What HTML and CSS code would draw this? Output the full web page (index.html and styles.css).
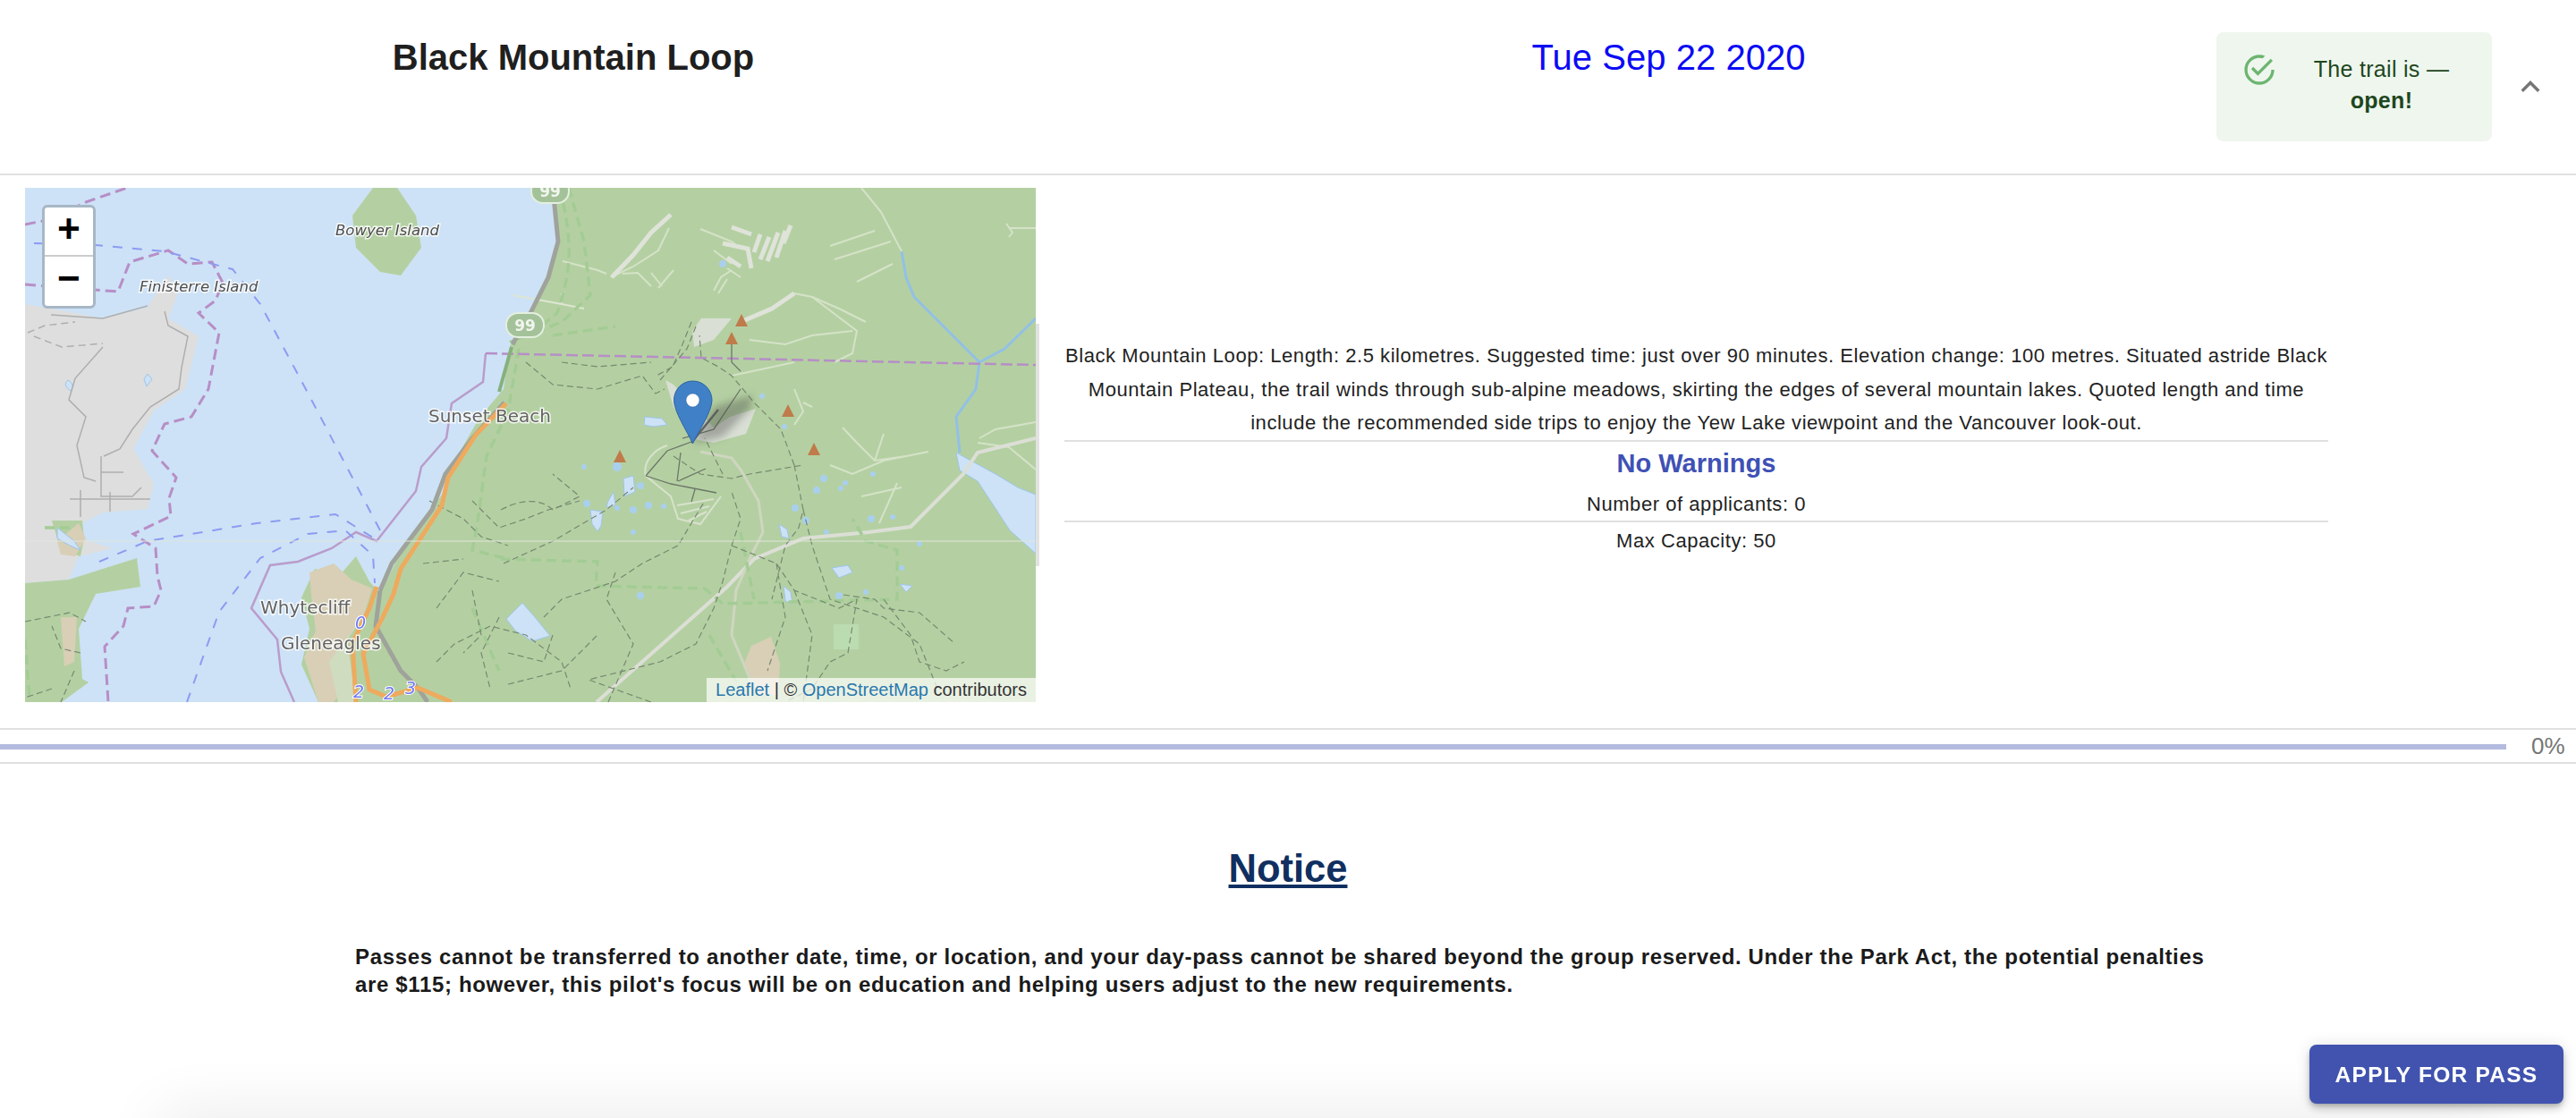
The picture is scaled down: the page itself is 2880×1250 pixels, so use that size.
FILE: index.html
```html
<!DOCTYPE html>
<html lang="en">
<head>
<meta charset="utf-8">
<title>Black Mountain Loop</title>
<link rel="stylesheet" href="styles.css">
</head>
<body>
<main class="page">
  <header class="trail-header">
    <h2 class="trail-name">Black Mountain Loop</h2>
    <div class="trail-date">Tue Sep 22 2020</div>
    <div class="status">
      <svg class="status-icon" viewBox="0 0 24 24"><path d="M20 12a8 8 0 0 1-8 8 8 8 0 0 1-8-8 8 8 0 0 1 8-8c.76 0 1.5.11 2.2.31l1.57-1.57A9.8 9.8 0 0 0 12 2 10 10 0 0 0 2 12a10 10 0 0 0 10 10 10 10 0 0 0 10-10h-2zM7.91 10.08 6.5 11.5 11 16 21 6l-1.41-1.42L11 13.17l-3.09-3.09z"/></svg>
      <div class="status-text">The trail is —<br><strong>open!</strong></div>
    </div>
    <svg class="chevron" viewBox="0 0 24 24"><path d="M12 8l-6 6 1.41 1.41L12 10.83l4.59 4.58L18 14z"/></svg>
  </header>

  <section class="details">
    <div class="map">
      <svg class="map-art" viewBox="0 0 1130 575">
        <rect class="water" width="1130" height="575"/>
        <!-- land -->
        <path class="land" d="M591 0L594 59 585 98 571 132 542 177 535 225 508 257 481 304 466 343 420 407 397 454 385 440 370 412 351 434 324 426 309 458 318 493 309 533 328 575H1130V0Z"/>
        <path class="land-grey" d="M0 130L40 137 87 146 137 134 150 112 160 98 171 118 160 146 194 166 179 225 144 249 121 292 144 331 137 359 87 363 64 375 50 378 62 392 98 403 60 412 49 438 0 442Z"/>
        <path class="land" d="M0 442L49 438 125 414 129 446 79 454 60 493 64 549 71 553 41 575H0Z"/>
        <path class="land" d="M30 372L64 372 66 392 62 412 40 405Z"/>
        <path class="land" d="M389 0H416L437 31 443 67 420 98 397 94 370 67 366 31Z"/>
        <path class="tan" d="M318 430L345 420 365 438 388 448 378 480 360 505 365 550 345 575 328 575 312 525 325 495 320 455Z"/>
        <path class="tan" d="M36 395L60 375 68 392 56 412 40 410Z"/>
        <path class="tan" d="M40 480H58L55 530 44 535Z"/>
        <path class="tan" d="M804 532L812 512 834 502 844 532 842 567 820 567Z"/>
        <rect class="meadow" x="904" y="488" width="28" height="28"/>
        <path class="land-light" d="M377 480L360 505 370 575H350L340 530Z"/>
        <path class="grey-patch" d="M756 146L790 146 770 170 748 178 746 160Z"/>
        <path class="grey-patch" d="M716 215L725 220 770 268 788 256 817 247 806 275 770 285 752 282 725 245Z"/>

        <!-- lakes and rivers -->
        <path class="lake" d="M1041 296L1085 320 1110 335 1130 343V409L1101 383 1065 328 1045 316Z"/>
        <path class="lake" d="M538 482L556 464 570 480 587 501 567 507 548 495Z"/>
        <path class="lake" d="M693 256L712 258 718 265 702 267 692 265Z"/>
        <path class="lake" d="M669 325L680 322 682 340 670 345Z"/>
        <path class="lake" d="M652 350L658 340 660 355 650 357Z"/>
        <path class="lake" d="M632 360L646 362 644 378 640 384 634 376Z"/>
        <path class="lake" d="M902 425L920 422 925 430 910 436Z"/>
        <path class="lake" d="M843 376L852 382 854 392 846 390Z"/>
        <path class="lake" d="M848 445L856 452 858 465 850 462Z"/>
        <path class="lake" d="M978 443L992 445 985 452Z"/>
        <path class="lake" d="M48 215C53 218 55 222 51 227 44 222 44 218 48 215ZM137 208L142 214 136 222 133 214Z"/>
        <path class="lake" d="M36 380L55 395 62 405 50 400 36 392Z"/>
        <g class="lake-dots">
          <circle cx="628" cy="353" r="4"/><circle cx="662" cy="358" r="3"/><circle cx="680" cy="360" r="4"/><circle cx="697" cy="355" r="4"/><circle cx="714" cy="356" r="3"/><circle cx="680" cy="385" r="3"/><circle cx="625" cy="312" r="3"/><circle cx="662" cy="312" r="5"/><circle cx="688" cy="333" r="4"/>
          <circle cx="885" cy="338" r="4"/><circle cx="912" cy="336" r="3"/><circle cx="893" cy="325" r="4"/><circle cx="917" cy="330" r="3"/><circle cx="861" cy="358" r="4"/><circle cx="873" cy="372" r="4"/><circle cx="896" cy="385" r="3"/><circle cx="946" cy="370" r="4"/><circle cx="970" cy="368" r="3"/><circle cx="948" cy="320" r="3"/><circle cx="980" cy="425" r="3"/><circle cx="910" cy="456" r="4"/><circle cx="940" cy="452" r="3"/><circle cx="688" cy="456" r="4"/><circle cx="824" cy="233" r="3"/><circle cx="849" cy="267" r="3"/><circle cx="780" cy="85" r="4"/><circle cx="1000" cy="398" r="3"/>
        </g>
        <path class="river" d="M980 71L985 100 994 122 1030 158 1067 195 1063 225 1041 256 1045 296M1067 195L1095 180 1130 146"/>

        <!-- light clearings and white roads -->
        <g class="clearing">
          <path d="M601 82L640 92 650 96M655 100L680 88 708 70 720 45"/>
          <path d="M668 96L685 95 700 110M700 95L712 110M725 92L708 112"/>
          <path d="M755 46L790 60 800 68M770 70L790 85M785 90L800 100"/>
          <path d="M770 115L778 100 790 92M775 118L785 102"/>
          <path class="wide" d="M790 44L812 52M780 62L808 68 812 90M785 78L800 88"/>
          <path class="wide" d="M815 72L822 52M822 80L832 55M830 82L842 50M840 78L850 48M848 62L856 42"/>
          <path class="wide" d="M656 100L680 75 700 50 722 30"/>
          <path class="wide" d="M800 150L835 135 860 118"/>
          <path d="M860 118L880 122 910 135 940 150M810 170L850 175 880 165 925 160"/>
          <path d="M880 122L930 160 925 185 905 195M790 210L860 195"/>
          <path d="M900 65L950 48M905 80L968 60M930 105L970 85M935 0L957 27 980 71"/>
          <path d="M1100 45H1130M1097 40L1104 50 1100 55"/>
          <path d="M914 268L930 285 950 305 985 300M950 305L960 275M900 310L925 320 960 305 1010 295M955 375L975 330M935 345L980 335"/>
          <path d="M860 225L870 250 860 265M870 240L880 245"/>
          <path d="M1067 280L1085 270 1130 262M1065 285L1100 290 1130 315"/>
        </g>
        <path class="road-white" d="M639 575L785 446 815 415 870 392 943 385 990 379 1049 320 1065 296 1130 280"/>
        <path class="road-white mid" d="M755 295L790 302 800 315 820 350 825 385 810 415 795 450 790 500 815 560"/>
        <path class="road-white thin" d="M694 322C690 305 705 292 718 288M694 322L722 345 730 370 755 376 778 345M729 355L770 348M733 364L765 356M742 372L762 362"/>
        <path class="thin-white" d="M546 120L600 130 625 135M600 130V118"/>

        <!-- park boundaries -->
        <path class="park" d="M598 0C612 60 612 90 595 140L570 160 544 172M608 0L625 60 632 120 600 150 544 172 552 180 540 250M590 165L660 155"/>
        <path class="park" d="M532 415L640 418 638 445 760 448 780 465 975 460 975 405 940 395 925 370M540 250L516 300 505 380 500 405 540 415"/>
        <path class="park" d="M800 385L815 460M765 500L800 560"/>
        <path class="park" d="M0 505L5 570M500 470L530 540M50 380H20"/>

        <!-- administrative lines -->
        <path class="admin-dash" d="M0 41L30 35 68 16 114 0M0 108L104 116 117 83 160 70 182 85 209 83 221 106 213 126 194 140 217 162 205 225 186 256 156 264 142 294 169 324 161 347 163 367 121 387 146 403 148 434 152 450 144 468 115 470 110 490 89 513 93 575"/>
        <path class="admin-solid" d="M515 185L512 217 477 241 471 280 443 312 437 339 393 395 370 385 343 403 305 418 274 422 253 470 282 505 286 541 301 575"/>
        <path class="admin-dash thin" d="M515 185L1130 198"/>

        <!-- ferry lines -->
        <path class="ferry" d="M10 62L79 64 156 71 232 91 263 130 316 229 397 383"/>
        <path class="ferry" d="M83 418L137 395 259 375 347 365 389 391"/>
        <path class="ferry" d="M181 575L217 474 263 414 316 387 358 383 389 411 391 442"/>

        <!-- local roads on the grey land -->
        <path class="local" d="M29 142L87 146 137 132"/>
        <path class="local" d="M87 178L56 213 49 237 68 256 58 288 66 324 79 328M156 138L160 154 182 166 175 201 172 225 140 245 120 270 106 292 88 300M85 300V345L120 345 130 335M85 318H110M95 340V362M50 348H140M62 338V368"/>
        <path class="local dash" d="M3 162L22 154 56 150M10 166L41 178 87 174"/>

        <!-- trails -->
        <g class="trail">
          <path d="M0 485L50 475 68 485M62 520L40 515 30 490M30 560L0 570M55 540L40 575"/>
          <path d="M452 350L490 370 510 390 540 400M500 350L530 380 560 370 585 360 620 350M445 420L490 415M460 470L490 430 530 440M500 450L510 500 490 520M530 480L510 520 520 560M460 530L480 510 520 490 560 500 600 530 610 560M540 520L580 530 590 500"/>
          <path d="M532 360C560 345 580 350 590 360L620 345 590 320M535 420L590 395 650 360 680 335M580 480L600 460 660 440 690 420 730 400 760 350"/>
          <path d="M652 575L680 510 650 460 660 430M700 575L630 550 710 530 750 510 770 470 780 440 790 400 800 370 790 340M540 555L600 540 640 500"/>
          <path d="M560 195L590 220 640 225 690 210 705 230 715 225M600 195L640 200 700 195M710 215L740 180 750 155"/>
          <path d="M745 150L735 175 724 200 706 210"/>
          <path d="M725 300L755 320 790 325 810 320 870 310M780 320L760 280M860 310L845 270 815 240 790 210 775 200 756 190 754 165"/>
          <path d="M860 310L870 360 865 380 850 400 835 460M870 360L880 400 900 460 960 480 1000 510 1020 560"/>
          <path d="M790 400L840 420 860 450 910 470 930 460 920 520 900 530 880 560 850 575M840 420L850 480 830 540M860 450L880 500 870 575M960 460L990 500 1000 530 1030 540 1050 530"/>
          <path d="M915 455L950 460 960 470 1000 475 1040 510"/>
        </g>
        <g class="trail-dark">
          <path d="M694 322L718 294 745 284M694 322L722 331 773 341M761 314L730 328M733 296L729 328M749 337L745 351M735 280L770 270 790 240 800 225"/>
          <path d="M790 175V195L800 205"/>
          <path d="M745 285L775 248" class="heavy"/>
        </g>

        <!-- highway -->
        <path class="road-grey" d="M536 240L500 280 470 320 455 360 410 420 397 450M590 0L596 60 585 100 565 140 545 175M397 450L392 490 420 540 440 560 450 575"/>
        <path class="road-grey-2" d="M544 178L530 228"/>
        <path class="highway" d="M538 241L504 276 473 324 466 355 420 426 412 454 399 482 378 521 385 561 404 569 439 559 477 575M393 446L385 470 366 509 370 575"/>

        <!-- tile seam -->
        <line class="seam" x1="0" y1="395" x2="1130" y2="395"/>

        <!-- summit triangles -->
        <g class="peak">
          <path d="M801 141L808 155H794Z"/><path d="M790 161L797 175H783Z"/><path d="M853 242L860 256H846Z"/><path d="M882 285L889 299H875Z"/><path d="M665 293L672 307H658Z"/>
        </g>

        <!-- shields and labels -->
        <g class="shield">
          <rect x="538" y="140" width="42" height="27" rx="13"/>
          <rect x="566" y="-10" width="42" height="27" rx="13"/>
        </g>
        <text class="shield-num" x="559" y="160">99</text>
        <text class="shield-num" x="587" y="10">99</text>
        <text class="place-i" x="347" y="53">Bowyer Island</text>
        <text class="place-i" x="128" y="116">Finisterre Island</text>
        <text class="place" x="451" y="262">Sunset Beach</text>
        <text class="place" x="263" y="476">Whytecliff</text>
        <text class="place" x="286" y="516">Gleneagles</text>
        <text class="exit" x="369" y="493">0</text>
        <text class="exit" x="367" y="570">2</text>
        <text class="exit" x="401" y="572">2</text>
        <text class="exit" x="425" y="566">3</text>

        <!-- marker -->
        <path class="marker-shadow" d="M747 286L770 245 812 232 812 245 780 278Z"/>
        <path class="marker" d="M746.5 216C734 216 725.5 226 725.5 237.500C725.500 250 740 272 746.500 286C753 272 768 250 768 237.500C768 226 759 216 746.500 216Z"/>
        <circle class="marker-dot" cx="746.500" cy="237.500" r="7.500"/>
      </svg>

      <div class="zoom-box">
        <div class="zoom-btn">+</div>
        <div class="zoom-btn">−</div>
      </div>
      <div class="attribution"><a href="#">Leaflet</a> | © <a href="#">OpenStreetMap</a> contributors</div>
      <div class="map-sliver"></div>
    </div>

    <div class="info">
      <p class="description">Black Mountain Loop: Length: 2.5 kilometres. Suggested time: just over 90 minutes. Elevation change: 100 metres. Situated astride Black Mountain Plateau, the trail winds through sub-alpine meadows, skirting the edges of several mountain lakes. Quoted length and time include the recommended side trips to enjoy the Yew Lake viewpoint and the Vancouver look-out.</p>
      <h3 class="warnings">No Warnings</h3>
      <p class="stat">Number of applicants: 0</p>
      <p class="stat stat-last">Max Capacity: 50</p>
    </div>
  </section>

  <section class="progress">
    <div class="progress-bar"></div>
    <span class="progress-label">0%</span>
  </section>

  <section class="notice">
    <h2 class="notice-title">Notice</h2>
    <p class="notice-text">Passes cannot be transferred to another date, time, or location, and your day-pass cannot be shared beyond the group reserved. Under the Park Act, the potential penalties are $115; however, this pilot's focus will be on education and helping users adjust to the new requirements.</p>
  </section>
</main>
<div class="bottom-shade"></div>
<button class="apply">APPLY FOR PASS</button>
</body>
</html>
```
FILE: styles.css
```css
* { box-sizing: border-box; }
html, body { margin: 0; height: 100%; background: #fff; overflow: hidden; }
body { font-family: "Liberation Sans", Arial, sans-serif; color: #1d1d1d; }
.page { width: 2880px; height: 1250px; overflow: hidden; }

/* header */
.trail-header { height: 196px; border-bottom: 2px solid #e0e0e0; display: flex; align-items: flex-start; }
.trail-name { width: 1282px; margin: 40px 0 0; font-size: 40px; line-height: 48px; font-weight: 700; text-align: center; color: #1f1f1f; }
.trail-date { width: 1167px; margin-top: 40px; font-size: 40px; line-height: 48px; letter-spacing: 0.05px; text-align: center; color: #0b0bf5; }
.status { width: 308px; height: 122px; margin: 36px 0 0 29px; padding: 24px 0 0 32px; background: #eef6ee; border-radius: 8px; display: flex; color: #1e4620; }
.status-icon { width: 40px; height: 40px; fill: #6cb56f; flex: none; margin-top: -2px; margin-left: -4px; }
.status-text { width: 212px; padding-left: 21px; font-size: 25px; line-height: 35px; letter-spacing: 0.3px; text-align: center; }
.chevron { width: 42px; height: 42px; margin: 76px 0 0 22px; fill: #757575; flex: none; }

/* details */
.details { height: 620px; padding: 14px 0 29px 28px; border-bottom: 2px solid #e0e0e0; display: flex; align-items: center; }
.map { position: relative; width: 1130px; height: 575px; flex: none; }
.map-art { display: block; width: 100%; height: 100%; filter: blur(0.7px); }
.info { width: 1413px; margin: 7px 0 0 32px; text-align: center; }
.description { margin: 0; font-size: 22px; line-height: 37.500px; letter-spacing: 0.55px; border-bottom: 2px solid #e0e0e0; color: #222; }
.warnings { margin: 0; padding: 4px 0 8px; font-size: 29px; line-height: 40px; font-weight: 700; color: #3f51b5; }
.stat { margin: 0; font-size: 22px; line-height: 36px; letter-spacing: 0.55px; border-bottom: 2px solid #e0e0e0; color: #222; }
.stat-last { padding-top: 3px; border-bottom: 0; }

/* map art */
.water { fill: #cde2f6; }
.land { fill: #b4d0a2; }
.land-light { fill: #cfdcc0; }
.land-grey { fill: #dedede; }
.tan { fill: #d8cfb6; }
.meadow { fill: #bbdcb0; }
.grey-patch { fill: #d9dfd4; }
.lake { fill: #cde2f6; stroke: #9ec5e8; stroke-width: 1; }
.lake-dots circle { fill: #a9cfee; }
.river { fill: none; stroke: #92c0e6; stroke-width: 3; }
.clearing path { fill: none; stroke: #d5e2c8; stroke-width: 2; }
.clearing path.wide { stroke: #dfe3d9; stroke-width: 5; }
.road-white { fill: none; stroke: #dcdfd6; stroke-width: 4; }
.road-white.mid { stroke: #cfd6c0; stroke-width: 3; }
.road-white.thin { stroke: #d8e2cd; stroke-width: 2; }
.thin-white { fill: none; stroke: #dde6d2; stroke-width: 2; }
.park { fill: none; stroke: #a3cc94; stroke-width: 3.500; stroke-dasharray: 11 6; }
.admin-dash { fill: none; stroke: #b78ec6; stroke-width: 3; stroke-dasharray: 12 6; }
.admin-dash.thin { stroke-width: 2.500; stroke-dasharray: 13 5; }
.admin-solid { fill: none; stroke: #b99ccc; stroke-width: 2.500; }
.ferry { fill: none; stroke: #8c9bf3; stroke-width: 2; stroke-dasharray: 11 11; }
.local { fill: none; stroke: #aeaeae; stroke-width: 1.500; }
.local.dash { stroke-dasharray: 8 5; }
.trail path { fill: none; stroke: #778870; stroke-width: 1.200; stroke-dasharray: 7 4; }
.trail-dark path { fill: none; stroke: #6d7668; stroke-width: 1.300; }
.trail-dark path.heavy { stroke: #6a706a; stroke-width: 2.500; }
.road-grey { fill: none; stroke: #9fa39b; stroke-width: 5; }
.road-grey-2 { fill: none; stroke: #86b17e; stroke-width: 4; }
.highway { fill: none; stroke: #eeaa5e; stroke-width: 5; }
.seam { stroke: #dfe6dc; stroke-width: 1; }
.peak path { fill: #c07b4b; }
.shield rect { fill: #a4c29a; stroke: #e4efdf; stroke-width: 2; }
.shield-num { font-family: "DejaVu Sans", sans-serif; font-size: 17px; font-weight: 700; fill: #f1f5ee; text-anchor: middle; }
.place, .place-i { font-family: "DejaVu Sans", sans-serif; paint-order: stroke; stroke: rgba(255,255,255,.8); stroke-width: 3px; fill: #636363; }
.place { font-size: 20px; }
.place-i { font-size: 16.500px; font-style: italic; fill: #4d4d4d; }
.exit { font-family: "DejaVu Sans", sans-serif; font-size: 19px; font-style: italic; fill: #7079f0; paint-order: stroke; stroke: #fff; stroke-width: 2px; }
.marker-shadow { fill: rgba(60,60,60,.35); filter: blur(4px); }
.marker { fill: #3f80c6; stroke: #2f659f; stroke-width: 1; }
.marker-dot { fill: #fff; stroke: #34679c; stroke-width: 0.500; }

/* map controls */
.zoom-box { position: absolute; left: 19px; top: 19px; width: 60px; height: 116px; background: #fff; border: 3px solid #a7b7c6; border-radius: 6px; }
.zoom-btn { height: 55px; font-family: "Liberation Mono", monospace; font-size: 44px; font-weight: 700; line-height: 55px; text-align: center; color: #000; }
.zoom-btn:first-child { border-bottom: 2px solid #ccc; }
.attribution { position: absolute; right: 0; bottom: 0; height: 27px; padding: 0 10px; background: rgba(255,255,255,.7); font-size: 20px; line-height: 27px; color: #333; }
.attribution a { color: #2a78ae; text-decoration: none; }
.map-sliver { position: absolute; left: 1130px; top: 152px; width: 4px; height: 271px; background: #e2e2e2; }

/* progress */
.progress { height: 38px; border-bottom: 2px solid #e0e0e0; display: flex; align-items: center; }
.progress-bar { width: 2802px; height: 6px; margin-top: 2px; background: #b4bbdf; flex: none; }
.progress-label { margin-left: 28px; font-size: 26px; color: #757575; }

/* notice */
.notice { padding: 92px 397px 0; }
.notice-title { margin: 0; font-size: 43.500px; line-height: 50px; font-weight: 700; text-align: center; text-decoration: underline; color: #102f60; }
.notice-text { margin: 58px 0 0; width: 2075px; font-size: 24px; line-height: 31px; font-weight: 700; letter-spacing: 0.65px; color: #1a1a1a; }

/* overlays */
.bottom-shade { position: fixed; left: 190px; right: 90px; top: 1256px; height: 40px; box-shadow: 0 0 70px 10px rgba(0,0,0,.09); pointer-events: none; }
.apply { position: fixed; left: 2582px; top: 1168px; width: 284px; height: 66px; padding: 2px 0 0; border: 0; border-radius: 8px; background: #4153af; color: #fff; font-family: "Liberation Sans", Arial, sans-serif; font-size: 24.600px; font-weight: 700; letter-spacing: 1.200px; box-shadow: 0 3px 5px -1px rgba(0,0,0,.2), 0 6px 10px 0 rgba(0,0,0,.14), 0 1px 18px 0 rgba(0,0,0,.12); }
```
